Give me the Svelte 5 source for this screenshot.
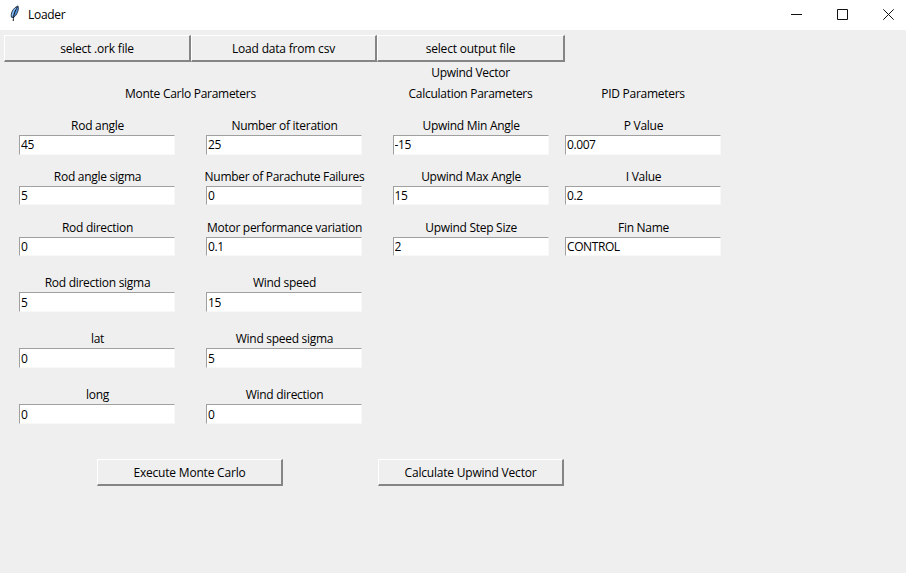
<script>
  const field = (label, value) => ({ label, value });
  const columns = [
    [
      field('Rod angle', '45'),
      field('Rod angle sigma', '5'),
      field('Rod direction', '0'),
      field('Rod direction sigma', '5'),
      field('lat', '0'),
      field('long', '0'),
    ],
    [
      field('Number of iteration', '25'),
      field('Number of Parachute Failures', '0'),
      field('Motor performance variation', '0.1'),
      field('Wind speed', '15'),
      field('Wind speed sigma', '5'),
      field('Wind direction', '0'),
    ],
    [
      field('Upwind Min Angle', '-15'),
      field('Upwind Max Angle', '15'),
      field('Upwind Step Size', '2'),
    ],
    [
      field('P Value', '0.007'),
      field('I Value', '0.2'),
      field('Fin Name', 'CONTROL'),
    ],
  ];
</script>

<div class="window">
  <header class="titlebar">
    <svg class="feather" width="12" height="17" viewBox="0 0 12 17">
      <path d="M2.4 12.2C1.6 8.5 3.6 3.2 9 .9 10.3 4.5 8 10.2 4.4 12.6Z" fill="#4d8fdc" stroke="#26303c" stroke-width=".9" />
      <path d="M8.4 2C6.2 5.5 4.6 9 4.2 16" fill="none" stroke="#111" stroke-width="1" />
      <path d="M7 3.2C4.8 5.2 3.6 7.6 3.5 10.5" fill="none" stroke="#a5d0ff" stroke-width="1" />
    </svg>
    <span class="title">Loader</span>
    <div class="controls">
      <svg width="11" height="11" viewBox="0 0 11 11"><path d="M0 5.5H11" /></svg>
      <svg width="11" height="11" viewBox="0 0 11 11"><path d="M.5.5H10.5V10.5H.5Z" /></svg>
      <svg width="11" height="11" viewBox="0 0 11 11"><path d="M.3.3L10.7 10.7M10.7.3L.3 10.7" /></svg>
    </div>
  </header>

  <nav class="toolbar">
    <button>select .ork file</button>
    <button>Load data from csv</button>
    <button>select output file</button>
  </nav>

  <div class="headings">
    <div class="monte">Monte Carlo Parameters</div>
    <div class="upwind">Upwind Vector<br />Calculation Parameters</div>
    <div class="pid">PID Parameters</div>
  </div>

  <main>
    {#each columns as fields}
      <section>
        {#each fields as item}
          <label>
            <span>{item.label}</span>
            <input type="text" value={item.value} />
          </label>
        {/each}
      </section>
    {/each}
  </main>

  <footer>
    <button>Execute Monte Carlo</button>
    <button>Calculate Upwind Vector</button>
  </footer>
</div>

<style>
  :global(body) {
    background: #efefef;
  }
  .window {
    box-sizing: border-box;
    width: 906px;
    height: 573px;
    overflow: hidden;
    background: #efefef;
    color: #000;
    font: 12px/21px 'Open Sans', 'Noto Sans', sans-serif;
    letter-spacing: -0.28px;
  }
  .titlebar {
    display: flex;
    align-items: center;
    height: 30px;
    padding: 0 12px 0 9px;
    background: #fff;
  }
  .feather {
    margin-top: -3px;
  }
  .title {
    margin-left: 7px;
    margin-top: -1px;
  }
  .controls {
    display: flex;
    gap: 35px;
    margin-left: auto;
    margin-top: -2px;
  }
  .controls path {
    fill: none;
    stroke: #111;
    stroke-width: 1;
  }
  .toolbar {
    display: flex;
    padding: 5px 0 0 4px;
  }
  button {
    box-sizing: border-box;
    width: 187px;
    height: 27px;
    margin: 0;
    padding: 1px 0 0;
    border: solid;
    border-width: 1px 2px 2px 1px;
    border-color: #fff #858585 #858585 #fff;
    background: #efefef;
    color: #000;
    font: inherit;
    letter-spacing: -0.2px;
  }
  .toolbar button:nth-child(2) {
    width: 186px;
  }
  .toolbar button:nth-child(3) {
    width: 188px;
  }
  .headings {
    display: flex;
    align-items: flex-end;
    height: 42px;
    padding-left: 4px;
    text-align: center;
  }
  .monte {
    width: 373px;
  }
  .upwind {
    width: 187px;
  }
  .pid {
    width: 158px;
  }
  main {
    display: flex;
    height: 355px;
    padding: 11px 0 0 19px;
    box-sizing: border-box;
  }
  section {
    width: 187px;
  }
  section:nth-child(2) {
    width: 186.6px;
  }
  section:nth-child(3) {
    width: 172.4px;
  }
  section:nth-child(4) {
    width: 156px;
  }
  label {
    display: flex;
    flex-direction: column;
    align-items: center;
    width: 156px;
    height: 50.8px;
  }
  label:nth-child(n + 3) {
    height: 55.9px;
  }
  label span {
    height: 20px;
    line-height: 21px;
    padding-left: 1px;
    white-space: nowrap;
  }
  input {
    box-sizing: border-box;
    width: 156px;
    height: 19.5px;
    padding: 0 0 0 1px;
    border: solid;
    border-width: 1px;
    border-color: #a0a0a0 #f8f8f8 #f8f8f8 #a0a0a0;
    border-radius: 0;
    outline: none;
    background: #fff;
    color: #000;
    font: inherit;
    letter-spacing: -0.4px;
  }
  footer {
    display: flex;
    gap: 95px;
    padding-left: 97px;
  }
  footer button {
    width: 186px;
  }
</style>
